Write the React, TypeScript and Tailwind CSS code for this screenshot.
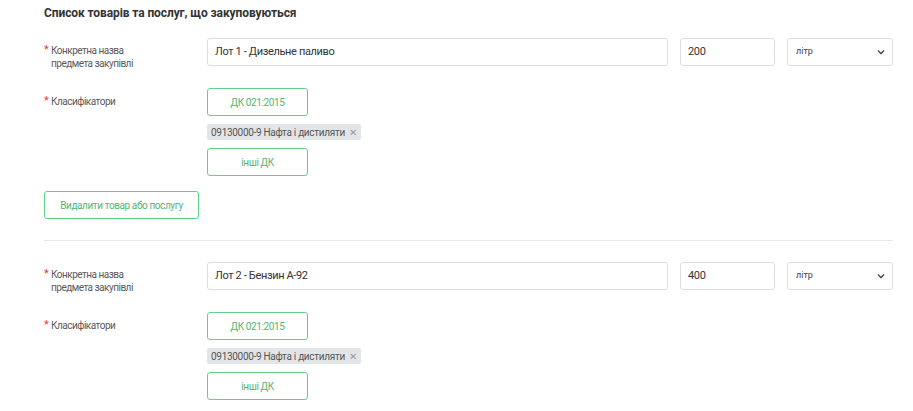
import React from "react";

function Label({ children }: { children: React.ReactNode }) {
  return (
    <div className="w-[163px] shrink-0 flex text-[10px] leading-[13px] text-[#5a5a5a] tracking-[-0.5px]">
      <span className="text-[#e53935] w-[7px] shrink-0 text-[11px] leading-[12px]">*</span>
      <span>{children}</span>
    </div>
  );
}

function GreenButton({ children, className = "" }: { children: React.ReactNode; className?: string }) {
  return (
    <button
      className={
        "h-[28px] border border-[#5fd28a] rounded-[3px] bg-white text-[#52b574] text-[10px] tracking-[-0.4px] flex items-center justify-center " +
        className
      }
    >
      {children}
    </button>
  );
}

function Item({ name, qty }: { name: string; qty: string }) {
  return (
    <div className="flex flex-col">
      <div className="flex items-start h-[28px]">
        <div className="pt-[6px]">
          <Label>
            Конкретна назва
            <br />
            предмета закупівлі
          </Label>
        </div>
        <div className="flex-1 flex gap-[12px]">
          <div className="flex-1 h-[28px] border border-[#dedede] rounded-[3px] flex items-center px-[7px] text-[11px] tracking-[-0.35px] text-[#333]">
            {name}
          </div>
          <div className="w-[95px] h-[28px] border border-[#dedede] rounded-[3px] flex items-center px-[7px] text-[11px] tracking-[-0.35px] text-[#333]">
            {qty}
          </div>
          <div className="w-[106px] h-[28px] border border-[#dedede] rounded-[3px] flex items-center justify-between pl-[8px] pr-[7px] text-[9px] text-[#444]">
            <span>літр</span>
            <svg width="8" height="6" viewBox="0 0 8 6">
              <path d="M1 1.5 L4 4.5 L7 1.5" fill="none" stroke="#555" strokeWidth="1.6" />
            </svg>
          </div>
        </div>
      </div>
      <div className="flex items-start mt-[22px]">
        <div className="pt-[7px]">
          <Label>Класифікатори</Label>
        </div>
        <div className="flex flex-col items-start">
          <GreenButton className="w-[101px]">ДК 021:2015</GreenButton>
          <div className="mt-[8px] h-[16px] bg-[#e3e6e9] rounded-[2px] flex items-center pl-[4px] pr-[4px] text-[10px] tracking-[-0.3px] text-[#555] gap-[4px]">
            <span>09130000-9 Нафта і дистиляти</span>
            <span className="text-[#999] text-[10px]">✕</span>
          </div>
          <GreenButton className="w-[101px] mt-[8px]">інші ДК</GreenButton>
        </div>
      </div>
    </div>
  );
}

export default function App() {
  return (
    <div
      className="w-[913px] h-[411px] bg-white overflow-hidden pl-[44px] pr-[20px] pt-[6px]"
      style={{ fontFamily: "Roboto, 'Liberation Sans', sans-serif" }}
    >
      <div className="text-[12px] font-bold text-[#333] leading-[15px] tracking-[-0.1px]">
        Список товарів та послуг, що закуповуються
      </div>
      <div className="mt-[17px]">
        <Item name="Лот 1 - Дизельне паливо" qty="200" />
      </div>
      <GreenButton className="w-[155px] mt-[15px]">Видалити товар або послугу</GreenButton>
      <div className="h-px bg-[#e6e6e6] mt-[21px]" />
      <div className="mt-[21px]">
        <Item name="Лот 2 - Бензин А-92" qty="400" />
      </div>
    </div>
  );
}
